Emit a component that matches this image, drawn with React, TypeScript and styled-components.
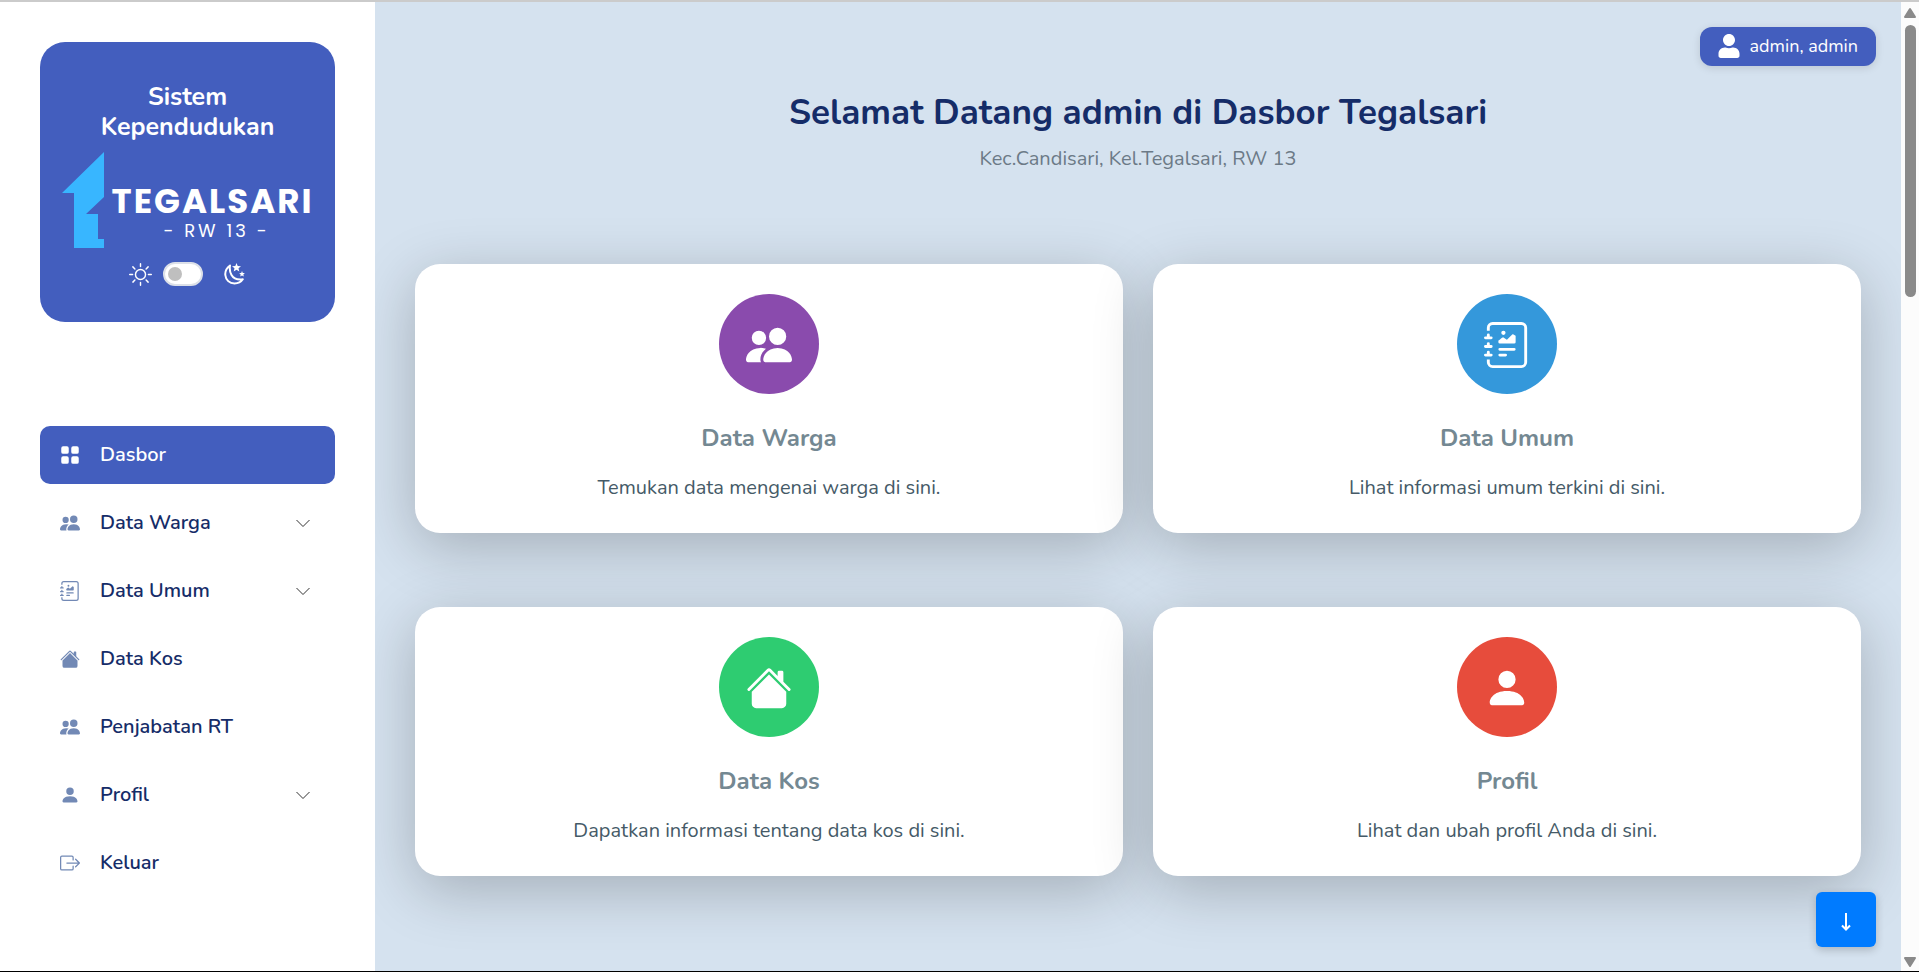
import React from "react";
import styled, { createGlobalStyle } from "styled-components";
import {
  BsBoxArrowRight,
  BsGridFill,
  BsHouseFill,
  BsJournalRichtext,
  BsPeopleFill,
  BsPersonFill,
  BsSun,
} from "react-icons/bs";
import { FaUser } from "react-icons/fa";
import type { IconType } from "react-icons";

const GlobalStyle = createGlobalStyle`
  *, *::before, *::after { box-sizing: border-box; }
  body {
    margin: 0;
    background: #d5e2ef;
    font-family: Nunito, Lato, "Noto Sans", sans-serif;
  }
  h1, h2, p, ul { margin: 0; padding: 0; }
`;

const Page = styled.div`
  display: grid;
  grid-template-columns: 375px minmax(0, 1fr) 18px;
  min-height: 100vh;
  border-top: 2px solid #cbcbcb;
  border-bottom: 1px solid #000;
`;

const Sidebar = styled.aside`
  z-index: 1;
  display: flex;
  flex-direction: column;
  gap: 104px;
  padding: 40px;
  background: #fff;
`;

const Brand = styled.div`
  display: flex;
  flex-direction: column;
  align-items: center;
  height: 280px;
  padding: 40px 20px 0;
  border-radius: 25px;
  background: #435ebe;
  color: #fff;
`;

const BrandName = styled.p`
  max-width: 200px;
  font-size: 25px;
  font-weight: 700;
  line-height: 30px;
  text-align: center;
`;

const Logo = styled.div`
  display: flex;
  align-items: flex-end;
  gap: 8px;
  margin-top: 10px;
`;

const LogoWords = styled.div`
  display: flex;
  flex-direction: column;
  align-items: center;
  padding-bottom: 5px;
  white-space: nowrap;
`;

const LogoTitle = styled.span`
  font-family: Poppins, Lato, sans-serif;
  font-size: 34px;
  font-weight: 700;
  line-height: 36px;
  letter-spacing: 2px;
`;

const LogoSub = styled.span`
  padding-left: 8px;
  font-family: Poppins, Lato, sans-serif;
  font-size: 18px;
  line-height: 24px;
  letter-spacing: 3px;
`;

const ThemeRow = styled.div`
  display: flex;
  align-items: center;
  gap: 11px;
  margin-top: 14px;
  padding-right: 2px;

  svg:last-child { margin-left: 10px; }
`;

const Switch = styled.input`
  appearance: none;
  display: flex;
  align-items: center;
  width: 40px;
  height: 24px;
  margin: 0;
  padding: 0 3px;
  border: 2px solid #dce0e8;
  border-radius: 12px;
  background: #fff;
  cursor: pointer;

  &::before {
    content: "";
    width: 14px;
    height: 14px;
    border-radius: 50%;
    background: #bfbfbf;
  }
  &:checked { justify-content: flex-end; }
`;

const Menu = styled.ul`
  display: flex;
  flex-direction: column;
  gap: 10px;
  list-style: none;
`;

const MenuLink = styled.a<{ $active?: boolean }>`
  display: flex;
  align-items: center;
  gap: 20px;
  height: 58px;
  padding: 0 25px 0 20px;
  border-radius: 10px;
  background: ${(p) => (p.$active ? "#435ebe" : "transparent")};
  color: ${(p) => (p.$active ? "#fff" : "#152c68")};
  text-decoration: none;

  > svg:first-child { color: ${(p) => (p.$active ? "#fff" : "#7289b5")}; }
`;

const MenuText = styled.span`
  flex: 1;
  font-size: 20px;
  line-height: 30px;
  font-weight: 600;
`;

const Main = styled.main`
  display: flex;
  flex-direction: column;
  padding: 25px 25px 60px 40px;
`;

const UserBadge = styled.button`
  display: flex;
  align-items: center;
  align-self: flex-end;
  gap: 9px;
  height: 39px;
  padding: 0 18px 2px 17px;
  border: 0;
  border-radius: 12px;
  background: #435ebe;
  box-shadow: 0 2px 8px rgba(0, 0, 0, 0.12);
  color: #fff;
  font-family: inherit;
  font-size: 18px;
  line-height: 24px;
`;

const Heading = styled.header`
  padding: 24px 15px 0 0;
  text-align: center;
`;

const Title = styled.h1`
  color: #152c68;
  font-size: 35px;
  font-weight: 700;
  line-height: 46px;
`;

const Subtitle = styled.p`
  margin-top: 8px;
  color: #6c7a87;
  font-size: 20px;
  line-height: 30px;
`;

const Cards = styled.section`
  display: grid;
  grid-template-columns: repeat(2, minmax(0, 1fr));
  gap: 74px 30px;
  margin-top: 90px;
  padding-right: 15px;
`;

const Card = styled.a`
  display: flex;
  flex-direction: column;
  align-items: center;
  padding: 30px;
  border-radius: 25px;
  background: #fff;
  box-shadow: 0 14px 60px rgba(0, 0, 0, 0.23);
  text-align: center;
  text-decoration: none;
`;

const Disc = styled.span<{ $color: string }>`
  display: flex;
  align-items: center;
  justify-content: center;
  width: 100px;
  height: 100px;
  padding-top: 2px;
  border-radius: 50%;
  background: ${(p) => p.$color};
  color: #fff;
`;

const CardTitle = styled.h2`
  margin-top: 29px;
  color: #748892;
  font-size: 24px;
  font-weight: 700;
  line-height: 30px;
`;

const CardText = styled.p`
  margin-top: 20px;
  color: #455a67;
  font-size: 20px;
  line-height: 30px;
`;

const DownButton = styled.button`
  position: fixed;
  right: 43px;
  bottom: 25px;
  display: flex;
  align-items: center;
  justify-content: center;
  width: 60px;
  height: 55px;
  padding-top: 5px;
  border: 0;
  border-radius: 6px;
  background: #007bff;
  box-shadow: 0 3px 8px rgba(0, 0, 0, 0.2);
  color: #fff;
`;

const Scrollbar = styled.div`
  display: flex;
  flex-direction: column;
  align-items: center;
  padding: 5px 0 3px;
  background: #fcfcfc;
  color: #8a8a8a;
`;

const Thumb = styled.div`
  width: 11px;
  height: 28vh;
  margin: 6px 0 auto;
  border-radius: 6px;
  background: #8a8a8a;
`;

interface MenuEntry {
  label: string;
  icon: IconType;
  active?: boolean;
  expandable?: boolean;
}

const menu: MenuEntry[] = [
  { label: "Dasbor", icon: BsGridFill, active: true },
  { label: "Data Warga", icon: BsPeopleFill, expandable: true },
  { label: "Data Umum", icon: BsJournalRichtext, expandable: true },
  { label: "Data Kos", icon: BsHouseFill },
  { label: "Penjabatan RT", icon: BsPeopleFill },
  { label: "Profil", icon: BsPersonFill, expandable: true },
  { label: "Keluar", icon: BsBoxArrowRight },
];

const cards = [
  { title: "Data Warga", text: "Temukan data mengenai warga di sini.", icon: BsPeopleFill, color: "#8a4bad" },
  { title: "Data Umum", text: "Lihat informasi umum terkini di sini.", icon: BsJournalRichtext, color: "#3498db" },
  { title: "Data Kos", text: "Dapatkan informasi tentang data kos di sini.", icon: BsHouseFill, color: "#2ecc71" },
  { title: "Profil", text: "Lihat dan ubah profil Anda di sini.", icon: BsPersonFill, color: "#e74c3c" },
];

const LogoMark = () => (
  <svg width="42" height="96" viewBox="0 0 42 96" aria-hidden="true">
    <path d="M42 0V45L24 62H36V87H42V96H12V41H0Z" fill="#38b6ff" />
  </svg>
);

const Chevron = () => (
  <svg width="14" height="9" viewBox="0 0 14 9" fill="none" aria-hidden="true">
    <path d="M0.500 1L7 7.500L13.500 1" stroke="#333" strokeWidth="1" />
  </svg>
);

const MoonStars = () => (
  <svg width="21" height="22" viewBox="0 0 21 22" aria-hidden="true">
    <path
      d="M6 2.500C2.500 5 1 8 1.300 12C1.800 17 5.500 20.500 10.500 20.500C14 20.500 17 19 18.800 16.300C13.500 17 9.500 15.500 7.500 12C5.800 9 5.500 5.500 6 2.500Z"
      fill="none"
      stroke="currentColor"
      strokeWidth="2"
      strokeLinejoin="round"
    />
    <path
      d="M12.500 0L13.700 3L17 3.200L14.500 5.300L15.300 8.500L12.500 6.700L9.700 8.500L10.500 5.300L8 3.200L11.300 3Z"
      fill="currentColor"
    />
    <path
      d="M18 8L18.800 9.900L20.900 10.100L19.300 11.500L19.800 13.600L18 12.500L16.200 13.600L16.700 11.500L15.100 10.100L17.200 9.900Z"
      fill="currentColor"
    />
  </svg>
);

const ScrollArrow = ({ down }: { down?: boolean }) => (
  <svg width="12" height="12" viewBox="0 0 12 12" aria-hidden="true">
    <path
      d={down ? "M1 2H11L6 10Z" : "M1 10H11L6 2Z"}
      fill="currentColor"
      stroke="currentColor"
      strokeWidth="2"
      strokeLinejoin="round"
    />
  </svg>
);

const App: React.FC = () => (
  <>
    <GlobalStyle />
    <Page>
      <Sidebar>
        <Brand>
          <BrandName>Sistem Kependudukan</BrandName>
          <Logo>
            <LogoMark />
            <LogoWords>
              <LogoTitle>TEGALSARI</LogoTitle>
              <LogoSub>- RW 13 -</LogoSub>
            </LogoWords>
          </Logo>
          <ThemeRow>
            <BsSun size={23} />
            <Switch type="checkbox" aria-label="Mode gelap" />
            <MoonStars />
          </ThemeRow>
        </Brand>
        <nav>
          <Menu>
            {menu.map(({ label, icon: Icon, active, expandable }) => (
              <li key={label}>
                <MenuLink href="#" $active={active}>
                  <Icon size={20} />
                  <MenuText>{label}</MenuText>
                  {expandable && <Chevron />}
                </MenuLink>
              </li>
            ))}
          </Menu>
        </nav>
      </Sidebar>
      <Main>
        <UserBadge type="button">
          <FaUser size={24} />
          admin, admin
        </UserBadge>
        <Heading>
          <Title>Selamat Datang admin di Dasbor Tegalsari</Title>
          <Subtitle>Kec.Candisari, Kel.Tegalsari, RW 13</Subtitle>
        </Heading>
        <Cards>
          {cards.map(({ title, text, icon: Icon, color }) => (
            <Card href="#" key={title}>
              <Disc $color={color}>
                <Icon size={46} />
              </Disc>
              <CardTitle>{title}</CardTitle>
              <CardText>{text}</CardText>
            </Card>
          ))}
        </Cards>
      </Main>
      <Scrollbar>
        <ScrollArrow />
        <Thumb />
        <ScrollArrow down />
      </Scrollbar>
    </Page>
    <DownButton type="button" aria-label="Gulir ke bawah">
      <svg width="10" height="18" viewBox="0 0 10 18" fill="none" aria-hidden="true">
        <path d="M5 0V16M1 12.500L5 16.500L9 12.500" stroke="currentColor" strokeWidth="2" />
      </svg>
    </DownButton>
  </>
);

export default App;
